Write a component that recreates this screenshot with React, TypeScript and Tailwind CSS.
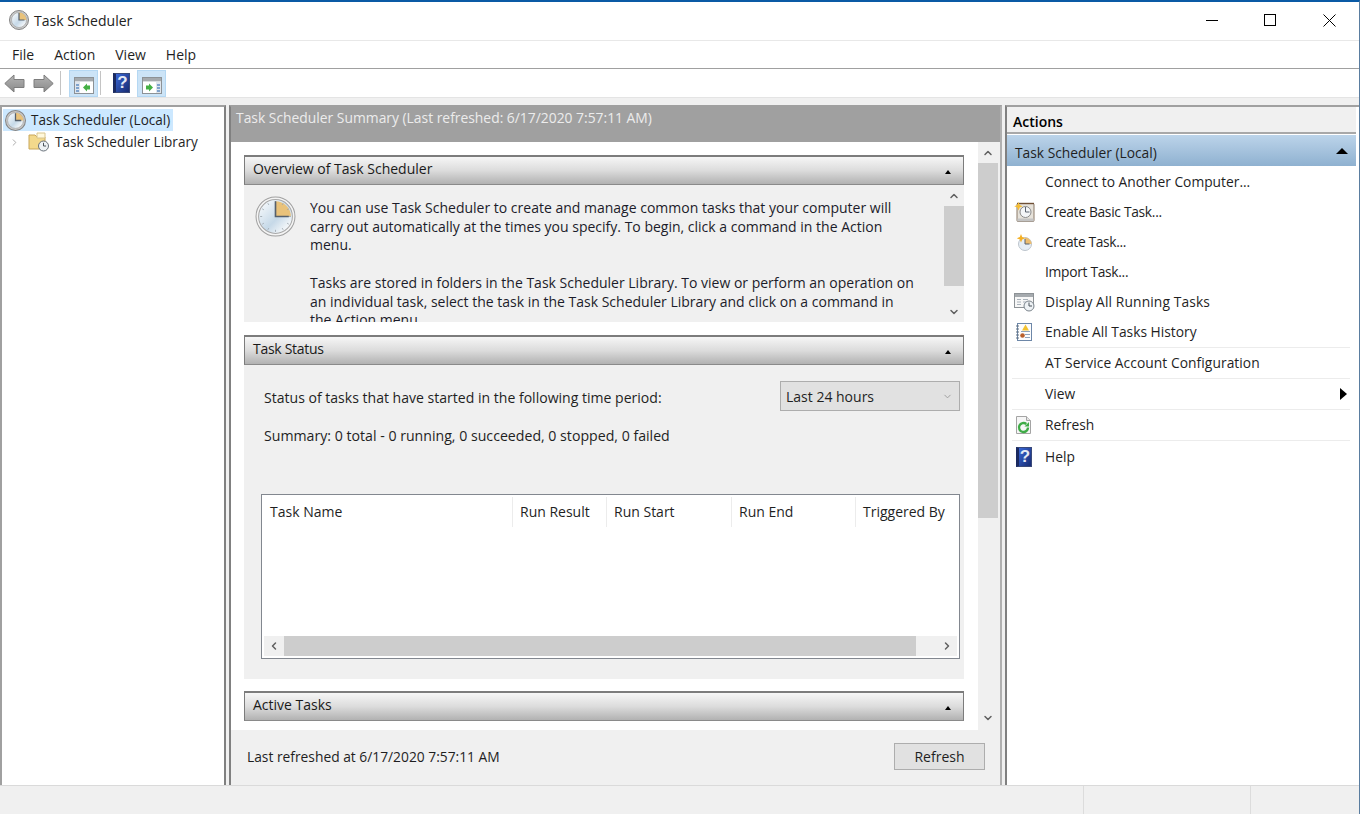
import { ChevronUp, ChevronDown, ChevronLeft, ChevronRight } from "lucide-react";

const font = "font-['Open_Sans','Noto_Sans',sans-serif]";

function Clock({ size = 20 }: { size?: number }) {
  const big = size > 30;
  return (
    <svg width={size} height={size} viewBox="0 0 40 40" className="shrink-0">
      <defs>
        <linearGradient id="clockFace" x1="0" y1="0" x2="1" y2="1">
          <stop offset="0" stopColor="#ffffff" />
          <stop offset="0.55" stopColor="#c6d9e8" />
          <stop offset="0.8" stopColor="#eef3f7" />
          <stop offset="1" stopColor="#ffffff" />
        </linearGradient>
      </defs>
      <circle cx="20" cy="20" r="19" fill={big ? "#f4f4f4" : "#c9c9c9"} stroke={big ? "#a0a0a0" : "#858585"} strokeWidth={big ? 1 : 2} />
      <circle cx="20" cy="20" r={big ? 16.5 : 15} fill="url(#clockFace)" stroke={big ? "#a8a8a8" : "#8f8f8f"} strokeWidth="1" />
      <path d="M20 20V5A15 15 0 0 1 35 20Z" fill="#e9c27a" />
      {big && (
        <path d="M20 5v2M20 33v2M5 20h2M33 20h2M12.500 7l1 1.700M27.500 7l-1 1.700M7 12.500l1.700 1M33 12.500l-1.700 1M7 27.500l1.700-1M33 27.500l-1.700-1M12.500 33l1-1.700M27.500 33l-1-1.700" stroke="#9aa4ad" strokeWidth="0.800" />
      )}
      <path d={big ? "M20 5v15h13" : "M20 6v14h11"} fill="none" stroke="#56606c" strokeWidth={big ? 1.6 : 2.4} />
    </svg>
  );
}

function FolderClock() {
  return (
    <svg width="22" height="20" viewBox="0 0 22 20" className="shrink-0">
      <path d="M1 3h6l2 2h8v12H1z" fill="#f3d98c" stroke="#c9a75a" />
      <path d="M9 1h8v5H9z" fill="#fff8dc" stroke="#d8c48c" />
      <circle cx="15.500" cy="14" r="5" fill="#eef2f5" stroke="#68717a" />
      <path d="M15.500 10.800V14h2.600" fill="none" stroke="#4a525a" />
    </svg>
  );
}

function NavArrow({ flip }: { flip?: boolean }) {
  return (
    <svg width="21" height="19" viewBox="0 0 21 19" className={flip ? "-scale-x-100" : ""}>
      <defs>
        <linearGradient id="navFill" x1="0" y1="0" x2="0" y2="1">
          <stop offset="0" stopColor="#b4b4b4" />
          <stop offset="1" stopColor="#8a8a8a" />
        </linearGradient>
      </defs>
      <path d="M.8 9.500L10 1v4.500h10v8H10V18z" fill="url(#navFill)" stroke="#7d7d7d" />
    </svg>
  );
}

function PaneIcon({ side }: { side: "left" | "right" }) {
  return (
    <svg width="20" height="17" viewBox="0 0 20 17">
      <rect x="0.500" y="0.500" width="19" height="16" fill="#ffffff" stroke="#8d9296" />
      <rect x="1" y="1" width="18" height="3" fill="#a5aaae" />
      <rect x="1" y="4" width="18" height="1" fill="#d9dde0" />
      {side === "left" ? (
        <>
          <rect x="1" y="5" width="5" height="11" fill="#dfe6ee" />
          <rect x="2" y="7" width="3" height="2" fill="#7fa3cc" />
          <rect x="2" y="10" width="3" height="2" fill="#7fa3cc" />
          <rect x="2" y="13" width="3" height="2" fill="#7fa3cc" />
          <path d="M9 10.500l4-4v8z" fill="#44b044" />
          <rect x="13" y="8.500" width="3" height="4" fill="#44b044" />
        </>
      ) : (
        <>
          <rect x="14" y="5" width="5" height="11" fill="#dfe6ee" />
          <rect x="15" y="7" width="3" height="2" fill="#7fa3cc" />
          <rect x="15" y="10" width="3" height="2" fill="#7fa3cc" />
          <rect x="15" y="13" width="3" height="2" fill="#7fa3cc" />
          <path d="M11 10.500l-4-4v8z" fill="#44b044" />
          <rect x="4" y="8.500" width="3" height="4" fill="#44b044" />
        </>
      )}
    </svg>
  );
}

function HelpBook({ size = 16, height = 20 }: { size?: number; height?: number }) {
  return (
    <div
      className="flex items-center justify-center bg-gradient-to-br from-[#3a68d8] to-[#182c72] border border-[#3a4a7a] border-l-[3px] border-l-[#1b2a60] font-['Liberation_Sans',sans-serif] font-bold text-[#e4e9f5] shrink-0"
      style={{ width: size, height, fontSize: height * 0.85 }}
    >
      ?
    </div>
  );
}

function ActionIcon({ name }: { name: string }) {
  if (name === "basic") {
    return (
      <svg width="21" height="21" viewBox="0 0 21 21">
        <rect x="3" y="1.500" width="17" height="18" rx="1" fill="#e6e2da" stroke="#8a7866" />
        <path d="M3 1.500h17" stroke="#6e4f35" strokeWidth="1.400" />
        <rect x="3.500" y="16.500" width="16" height="3" fill="#c4c4c4" />
        <circle cx="11.500" cy="10" r="5.500" fill="#f4f6f8" stroke="#8b8b8b" />
        <path d="M11.500 5v5h4" fill="none" stroke="#5c6470" />
        <path d="M4.500 0l1.200 3 3 1.200-3 1.200-1.200 3-1.200-3-3-1.200 3-1.200z" fill="#f5bd34" />
      </svg>
    );
  }
  if (name === "task") {
    return (
      <svg width="21" height="21" viewBox="0 0 21 21">
        <circle cx="11" cy="12" r="6.500" fill="#e7eef5" stroke="#bcc4cc" />
        <path d="M11 12V5.500A6.500 6.500 0 0 1 17.500 12z" fill="#edbd6f" />
        <path d="M11 7v5h4.500" fill="none" stroke="#59626e" />
        <path d="M7 2l1.200 3 3 1.200-3 1.200L7 10.500 5.800 7.400l-3-1.200 3-1.200z" fill="#f5b024" />
      </svg>
    );
  }
  if (name === "running") {
    return (
      <svg width="21" height="20" viewBox="0 0 21 20">
        <rect x="0.500" y="1.500" width="19" height="14" fill="#f7f7f7" stroke="#8d9296" />
        <rect x="1" y="2" width="18" height="3" fill="#a5aaae" />
        <path d="M3 7.500h4M3 10h4M3 12.500h4M9 7.500h5M9 10h3" stroke="#a9b2ba" strokeWidth="1.200" />
        <circle cx="15" cy="14" r="5" fill="#eef2f5" stroke="#7b848c" />
        <path d="M15 10.500V14h3" fill="none" stroke="#4a525a" />
      </svg>
    );
  }
  if (name === "history") {
    return (
      <svg width="20" height="20" viewBox="0 0 20 20">
        <rect x="3.500" y="1.500" width="14" height="17" fill="#fdfdfd" stroke="#6d87a8" />
        <path d="M2 4h3M2 7h3M2 10h3M2 13h3M2 16h3" stroke="#5f6f80" />
        <path d="M7 9.500h9M11 12.500h5M11 15.500h5" stroke="#8fa4bc" />
        <path d="M11.500 2.500l3.500 6h-7z" fill="#f2c230" />
        <circle cx="8.500" cy="13.500" r="2.300" fill="#b9602c" />
      </svg>
    );
  }
  if (name === "refresh") {
    return (
      <svg width="20" height="20" viewBox="0 0 20 20">
        <path d="M2.500 1.500h10l4 4v13h-14z" fill="#f6f6f6" stroke="#a4a4a4" />
        <path d="M12.500 1.500v4h4" fill="#e4e4e4" stroke="#a4a4a4" />
        <path d="M14 12.500a4.500 4.500 0 1 1-1.700-3.500" fill="none" stroke="#3eab46" strokeWidth="2.400" />
        <path d="M15 7v4.500h-4.500z" fill="#3eab46" />
      </svg>
    );
  }
  if (name === "help") return <HelpBook size={16} height={20} />;
  return null;
}

const actions = [
  { label: "Connect to Another Computer...", icon: "", h: "h-[30px]", t: "" },
  { label: "Create Basic Task...", icon: "basic", h: "h-[30px]", t: "tracking-[-0.3px]" },
  { label: "Create Task...", icon: "task", h: "h-[30px]", t: "tracking-[-0.35px]" },
  { label: "Import Task...", icon: "", h: "h-[30px]", t: "tracking-[-0.3px]" },
  { label: "Display All Running Tasks", icon: "running", h: "h-[30px]", t: "tracking-[0.12px]" },
  { label: "Enable All Tasks History", icon: "history", h: "h-[31px]", t: "", line: true },
  { label: "AT Service Account Configuration", icon: "", h: "h-[31px]", t: "tracking-[0.06px]", line: true },
  { label: "View", icon: "", h: "h-[31px]", t: "", line: true, arrow: true },
  { label: "Refresh", icon: "refresh", h: "h-[31px]", t: "", line: true },
  { label: "Help", icon: "help", h: "h-[32px]", t: "" },
];

function SectionHeader({ title, tight }: { title: string; tight?: boolean }) {
  return (
    <div className="h-[30px] flex items-center justify-between px-2 border border-[#7c7c7c] border-t-2 border-b-[#8a8a8a] bg-gradient-to-b from-[#f6f6f6] via-[#dcdcdc] to-[#b2b2b2] shrink-0">
      <span className={`text-[#1a1a1a] pb-[5px] ${tight ? "tracking-[-0.3px]" : ""}`}>{title}</span>
      <span className="w-0 h-0 mr-[4px] mt-[3px] border-x-[3.500px] border-x-transparent border-b-[4px] border-b-black" />
    </div>
  );
}

function ScrollArrowBtn({ children }: { children: React.ReactNode }) {
  return <div className="h-[20px] flex items-center justify-center text-[#606060] shrink-0">{children}</div>;
}

const columns = [
  { label: "Task Name", w: "w-[249px]" },
  { label: "Run Result", w: "w-[94px]" },
  { label: "Run Start", w: "w-[125px]" },
  { label: "Run End", w: "w-[124px]" },
  { label: "Triggered By", w: "flex-1" },
];

export default function App() {
  return (
    <div className={`${font} w-[1360px] h-[814px] overflow-hidden flex flex-col bg-[#f0f0f0] text-[14px] text-[#1f1f1f] border-t-2 border-t-[#0a5aa5] border-r border-r-[#5a7da0]`}>
      {/* title bar */}
      <div className="h-[39px] bg-white border-b border-[#e8e8e8] flex items-center pl-[9px] pb-[2px] shrink-0">
        <Clock size={20} />
        <span className="ml-[5px] text-[#222]">Task Scheduler</span>
        <div className="ml-auto flex items-center text-black">
          <div className="w-[56px] flex justify-center">
            <div className="w-[12px] h-px bg-black" />
          </div>
          <div className="w-[59px] mr-px flex justify-center">
            <div className="w-[12px] h-[12px] border border-black" />
          </div>
          <div className="w-[59px] flex justify-center">
            <svg width="13" height="13" viewBox="0 0 13 13">
              <path d="M.5.500l12 12M12.500.500l-12 12" stroke="#000" fill="none" />
            </svg>
          </div>
        </div>
      </div>

      {/* menu */}
      <div className="h-[28px] bg-white border-b border-[#a0a0a0] flex items-center gap-[20px] pl-[12px] shrink-0">
        <span>File</span>
        <span>Action</span>
        <span>View</span>
        <span>Help</span>
      </div>

      {/* toolbar */}
      <div className="h-[29px] bg-white flex items-center pl-[4px] shrink-0 border-b border-[#e4e4e4]">
        <NavArrow />
        <div className="w-[8px]" />
        <NavArrow flip />
        <div className="w-px h-[24px] bg-[#c4c4c4] ml-[6px]" />
        <div className="ml-[8px] w-[29px] h-[27px] bg-[#cce4f7] border border-[#b5d8f3] flex items-end pb-[2px] justify-center">
          <PaneIcon side="left" />
        </div>
        <div className="w-px h-[24px] bg-[#c4c4c4] ml-[2px]" />
        <div className="ml-[12px]">
          <HelpBook size={17} height={20} />
        </div>
        <div className="ml-[7px] w-[29px] h-[27px] bg-[#cce4f7] border border-[#b5d8f3] flex items-end pb-[2px] justify-center">
          <PaneIcon side="right" />
        </div>
      </div>

      {/* panes */}
      <div className="flex-1 min-h-0 flex pt-[7px]">
        {/* tree */}
        <div className="w-[226px] bg-white border-2 border-[#808080] shrink-0 pt-[2px] pl-[1px] border-b-0 border-t-[#a0a0a0] border-l-[#a0a0a0] text-[13.550px]">
          <div className="flex items-center h-[22px]">
            <div className="flex items-center h-[22px] bg-[#cce8ff] pl-[2px] pr-[3px]">
              <Clock size={21} />
              <span className="ml-[5px]">Task Scheduler (Local)</span>
            </div>
          </div>
          <div className="flex items-center h-[22px] pl-[6px]">
            <ChevronRight size={11} className="text-[#a6a6a6]" />
            <div className="ml-[8px]">
              <FolderClock />
            </div>
            <span className="ml-[5px]">Task Scheduler Library</span>
          </div>
        </div>

        {/* center */}
        <div className="w-[773px] ml-[3px] shrink-0 flex flex-col border-2 border-[#808080] border-b-0 border-r-[#b0b0b0] border-t-[#a0a0a0]">
          <div className="h-[35px] bg-[#a0a0a0] text-[#ececec] pl-[5px] pt-px shrink-0 text-[13.870px]">
            Task Scheduler Summary (Last refreshed: 6/17/2020 7:57:11 AM)
          </div>
          <div className="flex flex-1 min-h-0">
            <div className="w-[747px] h-[588px] bg-white pl-[13px] pr-[14px] pt-[13px] shrink-0 flex flex-col overflow-hidden">
              <SectionHeader title="Overview of Task Scheduler" />
              <div className="h-[137px] bg-[#f0f0f0] flex shrink-0 overflow-hidden">
                <div className="pl-[11px] pt-[11px] w-[66px] shrink-0">
                  <Clock size={41} />
                </div>
                <div className="flex-1 pt-[14px] pr-[27px] leading-[18.700px] text-[#1c1c2a]">
                  <p>You can use Task Scheduler to create and manage common tasks that your computer will carry out automatically at the times you specify. To begin, click a command in the Action menu.</p>
                  <p className="mt-[18.700px]">Tasks are stored in folders in the Task Scheduler Library. To view or perform an operation on an individual task, select the task in the Task Scheduler Library and click on a command in the Action menu.</p>
                </div>
                <div className="w-[20px] flex flex-col shrink-0">
                  <div className="h-[21px] flex items-center justify-center text-[#606060] shrink-0"><ChevronUp size={12} strokeWidth={3} /></div>
                  <div className="h-[80px] bg-[#cdcdcd]" />
                  <div className="flex-1" />
                  <ScrollArrowBtn><ChevronDown size={12} strokeWidth={3} /></ScrollArrowBtn>
                </div>
              </div>

              <div className="h-[13px] shrink-0" />
              <SectionHeader title="Task Status" tight />
              <div className="h-[314px] bg-[#f0f0f0] shrink-0 pl-[20px] pr-[4px] pt-[16px] flex flex-col">
                <div className="flex items-center justify-between">
                  <span className="text-[14.050px] pt-[4px]">Status of tasks that have started in the following time period:</span>
                  <div className="w-[180px] h-[30px] bg-[#e1e1e1] border border-[#adadad] flex items-center justify-between pl-[5px] pr-[6px]">
                    <span>Last 24 hours</span>
                    <ChevronDown size={11} className="text-[#9a9a9a]" />
                  </div>
                </div>
                <div className="mt-[15px] leading-[20px] text-[14.150px]">Summary: 0 total - 0 running, 0 succeeded, 0 stopped, 0 failed</div>
                <div className="mt-[48px] h-[165px] w-[699px] -ml-[3px] bg-white border border-[#82878f] flex flex-col p-[2px]">
                  <div className="flex h-[30px] shrink-0">
                    {columns.map((c) => (
                      <div key={c.label} className={`${c.w} border-r border-[#ececec] last:border-r-0 pl-[7px] first:pl-[6px] pb-[2px] flex items-center`}>
                        {c.label}
                      </div>
                    ))}
                  </div>
                  <div className="flex-1" />
                  <div className="h-[20px] flex bg-[#f0f0f0] shrink-0">
                    <div className="w-[20px] flex items-center justify-center text-[#606060]"><ChevronLeft size={12} strokeWidth={3} /></div>
                    <div className="w-[632px] bg-[#cdcdcd]" />
                    <div className="flex-1 flex justify-end">
                      <div className="w-[20px] flex items-center justify-center text-[#606060]"><ChevronRight size={12} strokeWidth={3} /></div>
                    </div>
                  </div>
                </div>
              </div>

              <div className="h-[12px] shrink-0" />
              <SectionHeader title="Active Tasks" />
            </div>
            <div className="w-[20px] h-[588px] bg-[#f0f0f0] flex flex-col shrink-0 pb-[2px]">
              <div className="h-[21px] flex items-center justify-center text-[#606060] shrink-0"><ChevronUp size={12} strokeWidth={3} /></div>
              <div className="h-[355px] bg-[#cdcdcd]" />
              <div className="flex-1" />
              <ScrollArrowBtn><ChevronDown size={12} strokeWidth={3} /></ScrollArrowBtn>
            </div>
          </div>
          <div className="h-[53px] bg-[#f0f0f0] flex items-center justify-between pl-[16px] pr-[15px] shrink-0">
            <span className="mb-[3px] text-[13.800px]">Last refreshed at 6/17/2020 7:57:11 AM</span>
            <div className="w-[91px] h-[27px] bg-[#e1e1e1] border border-[#adadad] flex items-center justify-center mb-[4px]">Refresh</div>
          </div>
        </div>

        {/* actions */}
        <div className="w-[354px] ml-[3px] shrink-0 flex flex-col bg-white border-l-2 border-t-2 border-[#808080] border-t-[#a0a0a0] text-[13.800px]">
          <div className="h-[27px] mr-[3px] bg-[#f0f0f0] border-b-2 border-[#a8a8a8] font-semibold text-black flex items-center pl-[6px] pt-[4px] shrink-0 text-[14px]">Actions</div>
          <div className="h-[31px] mr-[3px] bg-gradient-to-b from-[#bcd4ea] to-[#8fb1d0] flex items-center justify-between pl-[8px] pr-[8px] shrink-0 mt-px">
            <span className="pt-[6px]">Task Scheduler (Local)</span>
            <span className="w-0 h-0 border-x-[6px] border-x-transparent border-b-[6px] border-b-black" />
          </div>
          <div className="pl-[5px] pr-[9px] pt-px">
            {actions.map((a) => (
              <div key={a.label} className={`${a.h} relative flex items-center ${a.line ? "border-b border-[#ececec]" : ""}`}>
                <div className="w-[33px] flex justify-center shrink-0 pr-[9px]">
                  {a.icon && <ActionIcon name={a.icon} />}
                </div>
                <span className={a.t}>{a.label}</span>
                {a.arrow && (
                  <span className="absolute right-[3px] w-0 h-0 border-y-[6px] border-y-transparent border-l-[7px] border-l-black" />
                )}
              </div>
            ))}
          </div>
        </div>
      </div>

      {/* status bar */}
      <div className="h-[29px] border-t border-[#dadada] bg-[#f0f0f0] flex justify-end shrink-0">
        <div className="w-[167px] border-l border-[#dcdcdc]" />
        <div className="w-[109px] border-l border-[#dcdcdc]" />
      </div>
    </div>
  );
}
